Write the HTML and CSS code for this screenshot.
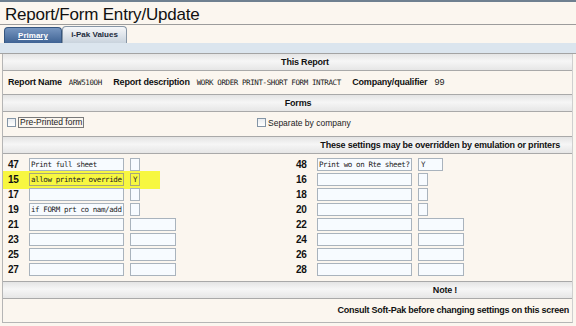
FILE: index.html
```html
<!DOCTYPE html>
<html lang="en">
<head>
    <meta charset="UTF-8">
    <title>Report/Form Entry/Update</title>
    <link rel="stylesheet" href="styles.css">
</head>
<body>
    <div class="topline"></div>
    <h1>Report/Form Entry/Update</h1>

    <div class="tabs">
        <a class="tab primary" href="#">Primary</a>
        <span class="tab active">i-Pak Values</span>
    </div>
    <div class="band"></div>

    <div class="panel">
        <div class="sechead first this-report">This Report</div>
        <div class="report">
            <b>Report Name</b><span class="mono">ARW510OH</span>
            <b>Report description</b><span class="mono">WORK ORDER PRINT-SHORT FORM INTRACT</span>
            <b>Company/qualifier</b><span class="plain">99</span>
        </div>

        <div class="sechead forms-head">Forms</div>
        <div class="forms">
            <label class="check"><span class="chk"></span><span class="focus">Pre-Printed form</span></label>
            <label class="check"><span class="chk"></span><span>Separate by company</span></label>
        </div>

        <div class="sechead settings-head">These settings may be overridden by emulation or printers</div>
        <div class="settings">
            <div class="row"><b class="num">47</b><span class="fld">Print full sheet</span><span class="fld box"></span></div>
            <div class="row"><b class="num">48</b><span class="fld">Print wo on Rte sheet?</span><span class="fld yn">Y</span></div>
            <div class="row hl"><b class="num">15</b><span class="fld">allow printer override</span><span class="fld box">Y</span></div>
            <div class="row"><b class="num">16</b><span class="fld"></span><span class="fld box"></span></div>
            <div class="row"><b class="num">17</b><span class="fld"></span><span class="fld box"></span></div>
            <div class="row"><b class="num">18</b><span class="fld"></span><span class="fld box"></span></div>
            <div class="row"><b class="num">19</b><span class="fld">if FORM prt co nam/add</span><span class="fld box"></span></div>
            <div class="row"><b class="num">20</b><span class="fld"></span><span class="fld box"></span></div>
            <div class="row"><b class="num">21</b><span class="fld"></span><span class="fld wide"></span></div>
            <div class="row"><b class="num">22</b><span class="fld"></span><span class="fld wide"></span></div>
            <div class="row"><b class="num">23</b><span class="fld"></span><span class="fld wide"></span></div>
            <div class="row"><b class="num">24</b><span class="fld"></span><span class="fld wide"></span></div>
            <div class="row"><b class="num">25</b><span class="fld"></span><span class="fld wide"></span></div>
            <div class="row"><b class="num">26</b><span class="fld"></span><span class="fld wide"></span></div>
            <div class="row"><b class="num">27</b><span class="fld"></span><span class="fld wide"></span></div>
            <div class="row"><b class="num">28</b><span class="fld"></span><span class="fld wide"></span></div>
        </div>

        <div class="sechead note-head">Note !</div>
        <div class="consult">Consult Soft-Pak before changing settings on this screen</div>
    </div>
</body>
</html>
```

FILE: styles.css
```css
body {
    margin: 0;
    background: #fbf6ef;
    font-family: "Liberation Sans", Arial, sans-serif;
    font-size: 9px;
    color: #111;
}
.topline {
    height: 2px;
    background: #6f8090;
}
h1 {
    margin: 0;
    height: 20px;
    padding: 2px 0 0 5px;
    font-size: 17px;
    font-weight: normal;
    line-height: 22px;
    letter-spacing: -0.2px;
    border-bottom: 1px solid #9c9c9c;
    overflow: hidden;
}

/* tabs */
.tabs {
    display: flex;
    align-items: flex-end;
    height: 18px;
    padding: 0 0 0 4px;
}
.tab {
    box-sizing: border-box;
    font-size: 8px;
    font-weight: bold;
    text-align: center;
    border-radius: 4px 4px 0 0;
}
.tab.primary {
    width: 58px;
    height: 16px;
    line-height: 15px;
    color: #fff;
    background: linear-gradient(#7796c0, #3f6394);
    border: 1px solid #36567f;
    border-bottom: none;
}
.tab.active {
    width: 65px;
    height: 17px;
    line-height: 16px;
    color: #1c2b3a;
    background: linear-gradient(#f6f7f9, #c9d3dd);
    border: 1px solid #8796a6;
    border-bottom: none;
}
.band {
    height: 10px;
    background: #dbe5ee;
    border-bottom: 1px solid #a3a3a3;
}

/* main panel */
.panel {
    margin: 0 3px 0 2px;
    border-left: 1px solid #b5b5b5;
    border-right: 1px solid #cfcfcf;
    border-bottom: 1px solid #b5b5b5;
}
.sechead {
    height: 16px;
    line-height: 16px;
    font-weight: bold;
    letter-spacing: -0.2px;
    text-align: center;
    background: linear-gradient(#e4e4e4, #f6f6f6 45%, #e6e6e6);
    border-top: 1px solid #a9a9a9;
    border-bottom: 1px solid #a9a9a9;
}
.sechead.first {
    border-top: none;
}
.this-report {
    padding-left: 35px;
}
.forms-head {
    padding-left: 21px;
}
.settings-head {
    text-align: right;
    padding-right: 12px;
}
.note-head {
    padding-left: 315px;
}

.report {
    height: 23px;
    line-height: 23px;
    padding-left: 5px;
    white-space: nowrap;
}
.report b {
    letter-spacing: -0.2px;
    margin-right: 7px;
}
.mono {
    font-family: "DejaVu Sans Mono", monospace;
    font-size: 7.5px;
    letter-spacing: -0.4px;
    color: #222;
}
.report .mono {
    margin-right: 9px;
}
.plain {
    color: #222;
}

.forms {
    display: grid;
    grid-template-columns: 250px auto;
    height: 19px;
    padding: 5px 0 0 4px;
}
.check {
    display: flex;
    align-items: center;
    height: 11px;
    font-size: 8.5px;
    color: #222;
}
.chk {
    box-sizing: border-box;
    width: 9px;
    height: 9px;
    margin-right: 2px;
    border: 1px solid #8495a6;
    background: linear-gradient(#e9edf1, #fff);
}
.focus {
    border: 1px solid #7a7a7a;
    padding: 0 1px;
    line-height: 9px;
}

/* settings grid */
.settings {
    display: grid;
    grid-template-columns: 288px 1fr;
    row-gap: 2px;
    padding: 4px 0 5px 5px;
}
.row {
    display: flex;
    align-items: center;
    height: 13px;
}
.row.hl {
    justify-self: start;
    background: #f7f740;
    margin: -2px 0 -3px -5px;
    padding: 2px 14px 3px 5px;
}
.num {
    width: 21px;
    font-size: 10px;
    letter-spacing: -0.3px;
}
.fld {
    box-sizing: border-box;
    width: 95px;
    height: 13px;
    margin-right: 6px;
    padding-left: 1px;
    border: 1px solid #a9b3bd;
    background: #f7fbff;
    font-family: "DejaVu Sans Mono", monospace;
    font-size: 7.5px;
    letter-spacing: -0.4px;
    line-height: 11px;
    white-space: nowrap;
    overflow: hidden;
    color: #222;
}
.row.hl .fld {
    background: transparent;
    border-color: #a7a77a;
}
.fld.box {
    width: 10px;
    padding-left: 2px;
}
.fld.yn {
    width: 25px;
    padding-left: 2px;
}
.fld.wide {
    width: 46px;
}

.consult {
    height: 23px;
    line-height: 23px;
    text-align: right;
    padding-right: 3px;
    font-weight: bold;
    letter-spacing: -0.25px;
}
```
